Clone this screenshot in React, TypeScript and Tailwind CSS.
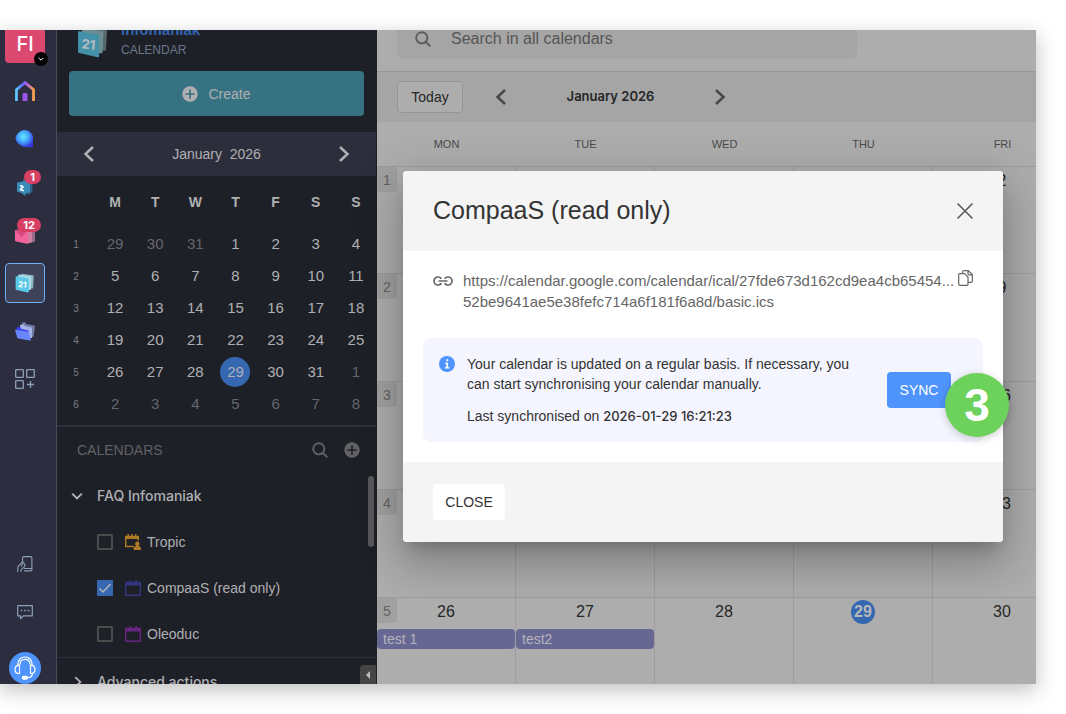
import type { ReactNode } from "react"
import { clsx } from "clsx"

interface CalendarEntry {
  id: string
  label: string
  color: string
  checked: boolean
  shared?: boolean
}

const calendars: CalendarEntry[] = [
  { id: "tropic", label: "Tropic", color: "#b07a26", checked: false, shared: true },
  { id: "compaas", label: "CompaaS (read only)", color: "#33357f", checked: true },
  { id: "oleoduc", label: "Oleoduc", color: "#682482", checked: false },
]

const miniDays = ["M", "T", "W", "T", "F", "S", "S"]

const miniWeeks = [
  [29, 30, 31, 1, 2, 3, 4],
  [5, 6, 7, 8, 9, 10, 11],
  [12, 13, 14, 15, 16, 17, 18],
  [19, 20, 21, 22, 23, 24, 25],
  [26, 27, 28, 29, 30, 31, 1],
  [2, 3, 4, 5, 6, 7, 8],
]

const weekDays = ["MON", "TUE", "WED", "THU", "FRI"]

const weeks = [
  [29, 30, 31, 1, 2],
  [5, 6, 7, 8, 9],
  [12, 13, 14, 15, 16],
  [19, 20, 21, 22, 23],
  [26, 27, 28, 29, 30],
]

const events: Record<string, string> = { "4-0": "test 1", "4-1": "test2" }

function isOtherMonth(week: number, day: number) {
  return (week === 0 && day > 7) || (week > 3 && day < 20)
}

function Chevron({ dir, className }: { dir: "left" | "right" | "down"; className?: string }) {
  const d = {
    left: "M14 3 6.500 10l7.500 7",
    right: "M6 3l7.500 7L6 17",
    down: "M4 7l6 6 6-6",
  }[dir]
  return (
    <svg viewBox="0 0 20 20" fill="none" stroke="currentColor" strokeWidth="2.500" className={className} aria-hidden="true">
      <path d={d} />
    </svg>
  )
}

function SearchIcon({ className }: { className?: string }) {
  return (
    <svg viewBox="0 0 16 16" fill="none" stroke="currentColor" strokeWidth="1.900" strokeLinecap="round" className={className} aria-hidden="true">
      <circle cx="6.800" cy="6.800" r="5.600" />
      <path d="M11 11 14.800 14.800" />
    </svg>
  )
}

function PlusCircle({ className, inner }: { className?: string; inner: string }) {
  return (
    <svg viewBox="0 0 16 16" className={className} aria-hidden="true">
      <circle cx="8" cy="8" r="7.7" fill="currentColor" />
      <path d="M8 4v8M4 8h8" stroke={inner} strokeWidth="1.7" strokeLinecap="round" />
    </svg>
  )
}

// Stacked tilted sheets with the day number
function CalendarLogo({ className, dim }: { className?: string; dim?: boolean }) {
  return (
    <svg viewBox="0 0 32 32" className={className} aria-hidden="true">
      <path d="M10 1 28.500 3.500c1 .2 1.500.8 1.500 1.700L29 23.500c0 1-.7 1.300-1.600 1.300L10 23Z" fill={dim ? "#55686d" : "#8fb4c4"} />
      <path d="M5 2.500 25 5c1 .2 1.500.8 1.500 1.700L25.500 26c0 1-.7 1.300-1.600 1.300L5 25Z" fill={dim ? "#6c8d94" : "#a8dbe6"} />
      <path d="M1 6.300C1 5.400 1.700 5 2.500 5.200L20.700 8.500c.9.2 1.400.7 1.400 1.600v20c0 1-.6 1.400-1.500 1.200L2.300 27c-.8-.2-1.300-.8-1.300-1.600Z" fill={dim ? "#4490a8" : "#5cc9e8"} />
      <text x="11.500" y="23" fontSize="13" fontWeight="700" textAnchor="middle" fontFamily="Inter, sans-serif" fill={dim ? "#b4bec0" : "#ffffff"} transform="rotate(6 11 19)">
        21
      </text>
    </svg>
  )
}

function HomeIcon() {
  return (
    <svg viewBox="0 0 20 20" className="size-5" aria-hidden="true">
      <defs>
        <linearGradient id="home" x1="0" y1="0" x2="1" y2="0">
          <stop offset="0" stopColor="#5fc8ff" />
          <stop offset="0.35" stopColor="#5a6bff" />
          <stop offset="0.6" stopColor="#b45cf0" />
          <stop offset="1" stopColor="#f7a04e" />
        </linearGradient>
      </defs>
      <path d="M1.500 20V8.600L10 1.600l8.500 7V20" fill="none" stroke="url(#home)" strokeWidth="2.800" />
      <path d="M7.500 20v-6.300c0-1 .7-1.700 1.700-1.700h1.600c1 0 1.700.7 1.700 1.700V20Z" fill="#9a54ea" />
    </svg>
  )
}

function OrbIcon() {
  return (
    <svg viewBox="0 0 20 20" className="size-5" aria-hidden="true">
      <defs>
        <radialGradient id="orb" cx="0.45" cy="0.38" r="0.62">
          <stop offset="0" stopColor="#66e6ff" />
          <stop offset="0.45" stopColor="#46b0fd" />
          <stop offset="1" stopColor="#3537d8" />
        </radialGradient>
      </defs>
      <path d="M9.500 1c4.500 0 8.500 3.500 8.500 7.500v8.500c0 1-.8 1.700-2 1.600l-6.500-.6C6 17.700.500 13 .500 9.500.500 6 5 1 9.500 1Z" fill="url(#orb)" />
    </svg>
  )
}

function ChatIcon() {
  return (
    <svg viewBox="0 0 20 20" className="size-5" aria-hidden="true">
      <path d="M8 2 16 4.500c1 .3 1.500 1 1.500 2V14l-3 3.500L8 15Z" fill="#2f5f86" />
      <path d="M2 5.500 10 4l5 2v9l-4.500 1.500V19l-4-3L2 14.500Z" fill="#3b8bb8" />
      <path d="m5 8.500 3.500 1.300M5 12.500l4 1.300M8.500 9.800 5 12.500" stroke="#ffffff" strokeWidth="1.500" />
    </svg>
  )
}

function MailIcon() {
  return (
    <svg viewBox="0 0 20 20" className="size-5" aria-hidden="true">
      <path d="M10 4h10v12.500l-6 2Z" fill="#9a6b8b" />
      <path d="M6 4h11v13l-5 1.500Z" fill="#cf7fa2" />
      <path d="M0 5l13-1v15L1.300 16.500C.500 16.300 0 15.800 0 15Z" fill="#f0669a" />
      <path d="M0 5l6.500 7.500L13 4Z" fill="#d84a80" />
    </svg>
  )
}

function FolderIcon() {
  return (
    <svg viewBox="0 0 20 20" className="size-5" aria-hidden="true">
      <path d="M7 1.500 9.500 1l2 2L19 4.500c.7.200 1 .6 1 1.200L18.500 16 8 15Z" fill="#6d79a3" />
      <path d="M5 4l3-1 2 2 7 1.500V17H6Z" fill="#a2b2e6" />
      <path d="M1.500 6.500 4.500 6l2 2 7 1.500.5 8.500-11-1Z" fill="#3a3ff2" />
      <path d="M.200 9.800C0 9 .500 8.700 1.200 8.800l11.600 2c.7.100 1 .5 1.200 1.100l1.800 6.600c.200.800-.2 1.200-1 1.100L3.500 17.500c-.7-.1-1.100-.4-1.300-1Z" fill="#6a86fb" />
    </svg>
  )
}

function AppsIcon() {
  return (
    <svg viewBox="0 0 20 20" fill="none" stroke="#8d9fb8" strokeWidth="1.300" className="size-5" aria-hidden="true">
      <rect x=".7" y=".7" width="7.600" height="7.600" rx=".6" />
      <rect x="11.700" y=".7" width="7.600" height="7.600" rx=".6" />
      <rect x=".7" y="11.700" width="7.600" height="7.600" rx=".6" />
      <path d="M15.500 12v7M12 15.500h7" />
    </svg>
  )
}

function DeviceIcon() {
  return (
    <svg viewBox="0 0 16 16" fill="none" stroke="#8d9fb8" strokeWidth="1.100" strokeLinecap="round" strokeLinejoin="round" className="size-4" aria-hidden="true">
      <path d="M5.500 7V2c0-.8.600-1.400 1.400-1.400h6.600c.8 0 1.400.6 1.400 1.400v11.500c0 .8-.6 1.400-1.400 1.400H7.500" />
      <path d="M.800 15.500v-3.800c0-1 .4-1.700 1.100-2.400l3.300-3.100c.5-.5 1.300.2.900.8L4 10.200M4 15.500v-1.700l3-2.600c.9-.8 1-2.500.2-3.600M7.500 12.500h7" />
    </svg>
  )
}

function FeedbackIcon() {
  return (
    <svg viewBox="0 0 16 16" fill="none" stroke="#8d9fb8" strokeWidth="1.200" strokeLinejoin="round" className="size-4" aria-hidden="true">
      <path d="M.700 1.600h14.600v10.200H6.500L3.500 14.600v-2.800H.700Z" />
      <path d="M3.700 6.600h1.600M7.200 6.600h1.600M10.700 6.600h1.600" strokeWidth="1.500" />
    </svg>
  )
}

function HeadsetIcon() {
  return (
    <svg viewBox="0 0 22 24" fill="none" stroke="#ffffff" strokeWidth="1.200" className="h-6 w-[22px]" aria-hidden="true">
      <path d="M4 9V8c0-4 3-7 7-7s7 3 7 7v1M6 8.500C6 5.300 8 3.300 11 3.300s5 2 5 5.200" />
      <path d="M5.500 9.200v8.300C2.800 17.500 1 16 1 13.400S2.800 9.200 5.500 9.200ZM16.500 9.200v8.300c2.700 0 4.500-1.500 4.500-4.100s-1.800-4.200-4.500-4.200Z" />
      <path d="M18.500 17c0 2.800-1.500 4.700-5 4.700" />
      <rect x="8.500" y="20.300" width="5" height="2.800" rx="1" fill="#ffffff" />
    </svg>
  )
}

function CalendarGlyph({ color, shared }: { color: string; shared?: boolean }) {
  return (
    <svg viewBox="0 0 16 16" className="size-4 shrink-0" aria-hidden="true">
      <path d={shared ? "M9 12.500H.700V2.500h12.600v4" : "M.700 2.500h14.600v12.800H.700Z"} fill="none" stroke={color} strokeWidth="1.400" />
      <path
        d={shared ? "M0 2h14v3H0ZM2.500 0h1.400v2H2.500ZM6.200 0h1.400v2H6.200ZM10 0h1.400v2H10Z" : "M0 2h16v3.500H0ZM4 0h1.600v2H4ZM10.400 0h1.600v2h-1.600Z"}
        fill={color}
      />
      {shared && <path d="M12.300 7.500a2.200 2.200 0 0 1 1.300 4c-.1.800 2.400 1.200 2.400 3V16H8.600v-1.500c0-1.800 2.500-2.200 2.400-3a2.200 2.200 0 0 1 1.300-4Z" fill={color} />}
    </svg>
  )
}

function RailButton({ label, active, badge, children }: { label: string; active?: boolean; badge?: string; children: ReactNode }) {
  return (
    <button
      type="button"
      aria-label={label}
      className={clsx(
        "relative flex size-10 shrink-0 items-center justify-center rounded",
        active && "border border-[#6cb0ff] bg-[#40425a]"
      )}
    >
      {children}
      {badge && (
        <span className="absolute top-[3px] right-1 rounded-full bg-[#d73f65] px-[6px] font-[Inter] text-[11px] leading-[14px] font-bold text-white">
          {badge}
        </span>
      )}
    </button>
  )
}

function Rail() {
  return (
    <nav className="flex w-[57px] shrink-0 flex-col gap-2 border-r border-[#484a5d] bg-[#2c2e3f] pl-[5px]">
      <button type="button" aria-label="Account" className="relative flex h-[33px] w-10 shrink-0 items-center justify-center rounded-b bg-[#db4870] pb-[6px] font-[Inter] text-xl font-medium text-white">
        FI
        <span className="absolute -right-[3px] -bottom-[3px] flex size-[14px] items-center justify-center rounded-full bg-black">
          <Chevron dir="down" className="size-2 text-white" />
        </span>
      </button>
      <RailButton label="Home"><HomeIcon /></RailButton>
      <RailButton label="Assistant"><OrbIcon /></RailButton>
      <RailButton label="Chat" badge="1"><ChatIcon /></RailButton>
      <RailButton label="Mail" badge="12"><MailIcon /></RailButton>
      <RailButton label="Calendar" active><CalendarLogo className="size-5" /></RailButton>
      <RailButton label="Drive"><FolderIcon /></RailButton>
      <RailButton label="All apps"><AppsIcon /></RailButton>
      <div className="mt-auto flex flex-col gap-2">
        <RailButton label="Devices"><DeviceIcon /></RailButton>
        <RailButton label="Feedback"><FeedbackIcon /></RailButton>
        <button type="button" aria-label="Support" className="mt-3 ml-1 flex size-8 items-center justify-center rounded-full bg-[#4f94fc]">
          <HeadsetIcon />
        </button>
      </div>
    </nav>
  )
}

function MiniCalendar() {
  return (
    <table className="mt-2 mb-[5px] w-full table-fixed border-separate border-spacing-0 text-center">
      <thead>
        <tr className="h-9 text-sm">
          <td className="w-[38px]" />
          {miniDays.map((day, i) => (
            <th key={i} scope="col" className="font-bold">{day}</th>
          ))}
        </tr>
      </thead>
      <tbody>
        <tr className="h-2"><td colSpan={8} /></tr>
        {miniWeeks.map((week, w) => (
          <tr key={w} className="h-8">
            <th scope="row" className="p-0 text-[10px] font-normal text-[#7d7d80]">{w + 1}</th>
            {week.map((day) => (
              <td key={day} className={clsx("p-0 text-[15px]", isOtherMonth(w, day) && "text-[#66676d]")}>
                {w === 4 && day === 29 ? (
                  <span className="mx-auto flex size-[30px] items-center justify-center rounded-full bg-[#3668b2]">{day}</span>
                ) : (
                  day
                )}
              </td>
            ))}
          </tr>
        ))}
      </tbody>
    </table>
  )
}

function Sidebar() {
  return (
    <aside className="relative flex w-[320px] shrink-0 flex-col overflow-hidden bg-[#1e2028] pr-px text-[#b0b0b2]">
      <div className="flex h-[41px] shrink-0 items-end gap-3 pb-[13px] pl-5">
        <CalendarLogo dim className="size-8 shrink-0" />
        <div>
          <p className="mb-[2px] text-[15px] leading-5 font-bold text-[#3363ae]">infomaniak</p>
          <p className="text-xs leading-4 text-[#6b7687]">CALENDAR</p>
        </div>
      </div>
      <div className="pr-3 pb-4 pl-3">
        <button type="button" className="flex h-[45px] w-full items-center justify-center gap-[10px] rounded bg-[#377282] text-sm">
          <PlusCircle inner="#377282" className="size-4" />
          Create
        </button>
      </div>
      <div className="flex h-11 shrink-0 items-center justify-between bg-[#2d2e3c] px-[22px] text-sm">
        <button type="button" aria-label="Previous month"><Chevron dir="left" className="size-5" /></button>
        <span>January&nbsp; 2026</span>
        <button type="button" aria-label="Next month"><Chevron dir="right" className="size-5" /></button>
      </div>
      <MiniCalendar />
      <div className="flex h-12 shrink-0 items-center gap-4 border-t-2 border-[#2f303d] pr-4 pl-5 text-[#626265]">
        <h2 className="flex-1 text-sm">CALENDARS</h2>
        <button type="button" aria-label="Search calendars"><SearchIcon className="size-4" /></button>
        <button type="button" aria-label="Add calendar"><PlusCircle inner="#1e2028" className="size-4" /></button>
      </div>
      <div className="relative min-h-0 flex-1 overflow-hidden">
        <button type="button" className="flex h-[46px] w-full items-center gap-3 pl-[12px] font-[Inter] text-sm font-medium">
          <Chevron dir="down" className="size-4" />
          FAQ Infomaniak
        </button>
        {calendars.map((cal) => (
          <label key={cal.id} className="flex h-[46px] items-center pl-10 text-sm">
            <span className="relative mr-3 flex size-4">
              <input
                type="checkbox"
                defaultChecked={cal.checked}
                className="peer size-4 appearance-none rounded-[1px] border-2 border-[#4c4b4b] checked:border-[#3668b2] checked:bg-[#3668b2]"
              />
              <svg viewBox="0 0 16 16" fill="none" stroke="#b5b5b5" strokeWidth="1.500" className="pointer-events-none absolute inset-0 hidden size-4 peer-checked:block" aria-hidden="true">
                <path d="m2.500 8.500 3.500 3.500 7.500-8" />
              </svg>
            </span>
            <CalendarGlyph color={cal.color} shared={cal.shared} />
            <span className="pl-[6px]">{cal.label}</span>
          </label>
        ))}
        <button type="button" className="flex h-12 w-full items-center gap-3 border-t border-[#2f303d] pl-[14px] font-[Inter] text-sm font-medium">
          <Chevron dir="right" className="size-[14px]" />
          Advanced actions
        </button>
        <span className="absolute top-[3px] right-[2px] h-[71px] w-[6px] rounded-full bg-[#59585a]" />
      </div>
      <button type="button" aria-label="Collapse sidebar" className="absolute right-px bottom-0 flex h-[19px] w-4 items-center justify-center rounded-tl bg-[#444444]">
        <svg viewBox="0 0 6 8" className="h-2 w-[6px]" fill="#bdbdbd" aria-hidden="true"><path d="M5 0v8L1 4Z" /></svg>
      </button>
    </aside>
  )
}

function MonthGrid() {
  return (
    <table className="w-[calc(100%+36px)] table-fixed border-separate border-spacing-0">
      <thead>
        <tr className="h-[45px] text-[11px] text-[#4a4a4a]">
          {weekDays.map((day) => (
            <th key={day} scope="col" className="border-b border-[#9b9b9b] p-0 font-normal">{day}</th>
          ))}
        </tr>
      </thead>
      <tbody>
        {weeks.map((week, w) => (
          <tr key={w} className={w === 0 ? "h-[106px]" : "h-[108px]"}>
            {week.map((day, d) => (
              <td key={day} className={clsx("relative border-r border-[#9d9d9d] p-0 align-top text-[#262626]", w > 0 && "border-t")}>
                {d === 0 && (
                  <span className="absolute top-0 left-0 flex h-[25px] w-5 items-center justify-center rounded-br-sm bg-[#a0a0a0] text-sm text-[#626262]">{w + 1}</span>
                )}
                <div className="flex h-7 items-center justify-center text-base">
                  {w === 4 && day === 29 ? (
                    <span className="flex size-6 items-center justify-center rounded-full bg-[#3668b2] font-bold text-[#b8b8b8]">{day}</span>
                  ) : (
                    day
                  )}
                </div>
                {events[`${w}-${d}`] && (
                  <button type="button" className="mt-[3px] block h-5 w-full rounded bg-[#676793] pl-[6px] text-left text-sm text-[#b4b4ba]">{events[`${w}-${d}`]}</button>
                )}
              </td>
            ))}
          </tr>
        ))}
      </tbody>
    </table>
  )
}

function MainPane() {
  return (
    <main className="min-w-0 flex-1 overflow-hidden bg-[#adadad]">
      <header className="border-b border-[#969696] pb-3 pl-5">
        <label className="flex h-[29px] w-[460px] items-center gap-5 rounded-b-md bg-[#a5a5a5] pb-3 pl-[18px]">
          <SearchIcon className="size-4 shrink-0 text-[#5c5c5c]" />
          <input type="search" aria-label="Search in all calendars" placeholder="Search in all calendars" className="h-5 w-full bg-transparent text-base placeholder:text-[#555555] focus:outline-none" />
        </label>
      </header>
      <div className="flex h-[50px] items-center bg-[#a5a5a5] pl-5 text-[#262626]">
        <button type="button" className="h-8 w-[66px] rounded border border-[#969696] bg-[#adadad] text-sm">Today</button>
        <div className="ml-7 flex w-[239px] items-center justify-between">
          <button type="button" aria-label="Previous month"><Chevron dir="left" className="size-5 text-[#484848]" /></button>
          <h1 className="font-[Inter] text-[13px] font-semibold">January 2026</h1>
          <button type="button" aria-label="Next month"><Chevron dir="right" className="size-5 text-[#484848]" /></button>
        </div>
      </div>
      <MonthGrid />
    </main>
  )
}

function SyncDialog() {
  return (
    <div className="absolute inset-0 flex items-center justify-end pr-[33px] pb-px">
      <section
        role="dialog"
        aria-labelledby="dialog-title"
        className="w-[600px] rounded-sm bg-white text-[#333333] shadow-[0_11px_15px_-7px_rgba(0,0,0,0.2),0_24px_38px_3px_rgba(0,0,0,0.14),0_9px_46px_8px_rgba(0,0,0,0.12)]"
      >
        <header className="flex h-20 items-center justify-between rounded-t-sm bg-[#f4f4f4] px-[30px]">
          <h2 id="dialog-title" className="text-[25px]">CompaaS (read only)</h2>
          <button type="button" aria-label="Close dialog">
            <svg viewBox="0 0 16 16" fill="none" stroke="#555555" strokeWidth="1.500" className="size-4" aria-hidden="true">
              <path d="m.5.5 15 15M15.500.5l-15 15" />
            </svg>
          </button>
        </header>

        <div className="px-5 pt-[19px] pb-5">
          <div className="flex px-[10px] text-[#666666]">
            <svg viewBox="0 0 20 10" fill="none" stroke="currentColor" strokeWidth="1.700" className="mt-[6px] mr-[10px] h-[10px] w-5 shrink-0" aria-hidden="true">
              <path d="M8.300 2.800C7.600 1.600 6.400 1 5 1a4 4 0 0 0 0 8c1.400 0 2.600-.6 3.300-1.800M11.700 2.800C12.400 1.600 13.600 1 15 1a4 4 0 0 1 0 8c-1.400 0-2.600-.6-3.300-1.800M5.500 5h9" />
            </svg>
            <p className="flex-1 text-[15px] leading-[21px]">
              https://calendar.google.com/calendar/ical/27fde673d162cd9ea4cb65454...
              <br />
              52be9641ae5e38fefc714a6f181f6a8d/basic.ics
            </p>
            <button type="button" aria-label="Copy link" className="h-4">
              <svg viewBox="0 0 15 16" fill="none" stroke="currentColor" strokeWidth="1.200" className="h-4 w-[15px]" aria-hidden="true">
                <path d="M1.700 3.600h4.800l3.500 3.500v7c0 .8-.5 1.300-1.200 1.300H1.900c-.7 0-1.200-.5-1.200-1.300V4.900c0-.8.400-1.300 1-1.300Z" />
                <path d="M4.600 3.500V1.900c0-.8.500-1.300 1.300-1.300h4.300l4.100 4v6.500c0 .8-.5 1.300-1.300 1.300h-3M10 .7v3c0 .7.400 1.100 1.100 1.100h3" />
              </svg>
            </button>
          </div>

          <div className="relative mt-[26px] flex rounded-lg bg-[#f4f5fe] p-4">
            <svg viewBox="0 0 16 16" className="mt-[2px] mr-3 size-4 shrink-0" aria-hidden="true">
              <circle cx="8" cy="8" r="8" fill="#4f94fc" />
              <path d="M7.300 3.300h1.900v1.900H7.300ZM6 6.700h3.100v4.600h1.400v1.200H5.800v-1.200h1.500V7.900H6Z" fill="#ffffff" />
            </svg>
            <div className="w-[400px] text-sm leading-5">
              <p>
                Your calendar is updated on a regular basis. If necessary, you
                <br />
                can start synchronising your calendar manually.
              </p>
              <p className="mt-3">
                Last synchronised on <span className="font-[Inter] text-[13px] font-medium">2026-01-29 16:21:23</span>
              </p>
            </div>
            <button type="button" className="mr-4 ml-auto h-9 w-16 self-center rounded bg-[#4f94fc] text-sm text-white">SYNC</button>
            {/* Step marker, sits across the box edge */}
            <span className="absolute top-[35px] -right-[26px] flex size-16 items-center justify-center rounded-full bg-[#6dd25c] text-[46px] font-bold text-white shadow-[0_2px_8px_rgba(0,0,0,0.2)]">
              3
            </span>
          </div>
        </div>

        <footer className="flex h-20 items-center rounded-b-sm bg-[#f4f4f4] px-[30px]">
          <button type="button" className="h-9 w-[72px] rounded bg-white text-sm">CLOSE</button>
        </footer>
      </section>
    </div>
  )
}

export default function App() {
  return (
    <div className="flex h-screen bg-white py-[30px] pr-[30px] font-['Liberation_Sans',Arial,sans-serif]">
      <div className="relative flex min-w-0 flex-1 overflow-hidden shadow-[0_6px_20px_rgba(0,0,0,0.25)]">
        <Rail />
        <Sidebar />
        <MainPane />
        <SyncDialog />
      </div>
    </div>
  )
}
